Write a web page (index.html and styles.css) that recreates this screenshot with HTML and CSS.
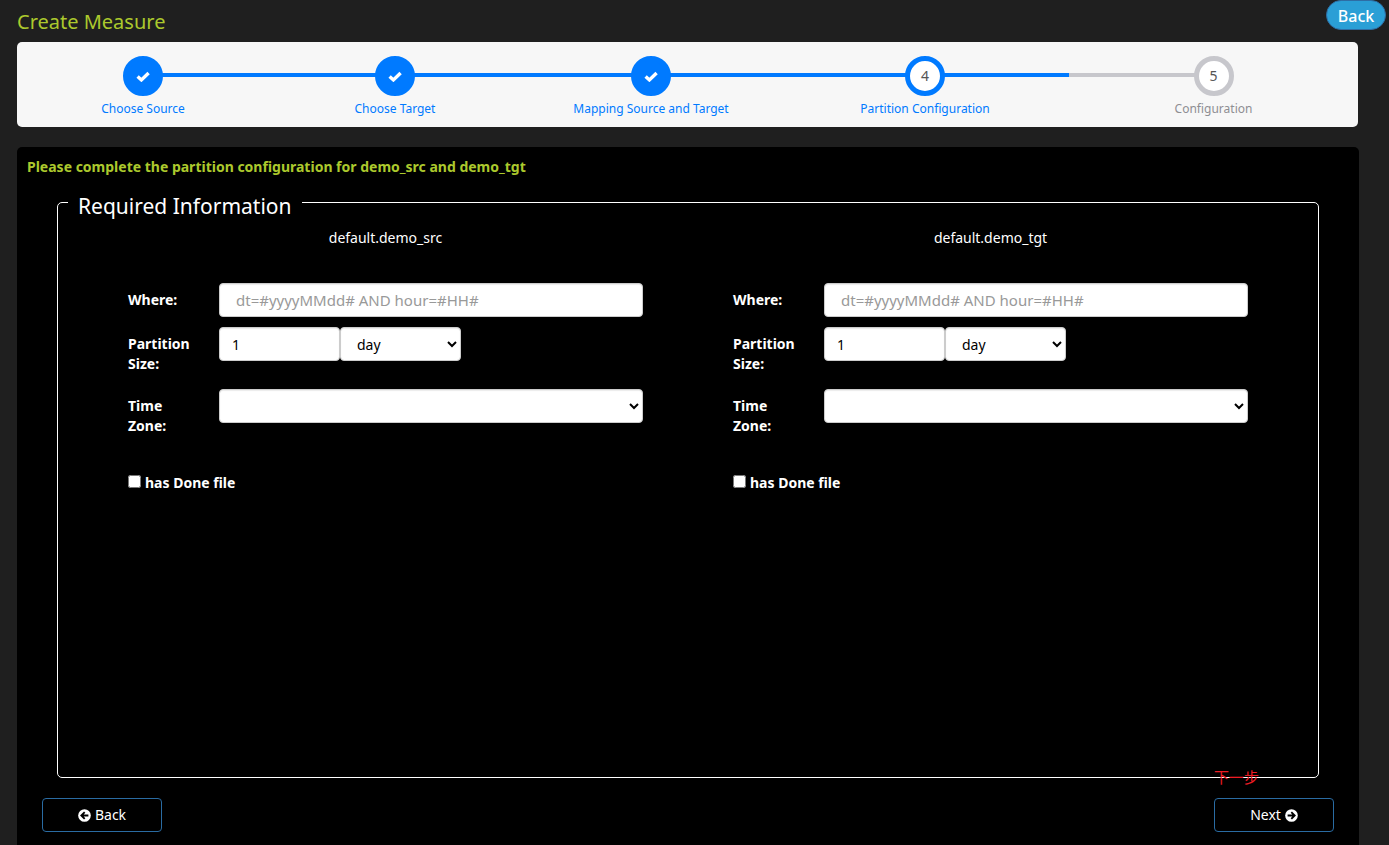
FILE: index.html
```html
<!DOCTYPE html>
<html lang="en">
<head>
<meta charset="utf-8">
<title>Create Measure</title>
<link rel="stylesheet" href="styles.css">
</head>
<body>
<header class="page-header">
  <h1 class="page-title">Create Measure</h1>
  <button type="button" class="top-back">Back</button>
</header>
<main class="page-main">
  <ol class="steps">
    <li class="step done"><span class="dot"><svg class="check" viewBox="0 0 14 11"><path d="M1.6 5.4 5.4 8.9 12.6 2"/></svg></span><span class="step-name">Choose Source</span></li>
    <li class="step done"><span class="dot"><svg class="check" viewBox="0 0 14 11"><path d="M1.6 5.4 5.4 8.9 12.6 2"/></svg></span><span class="step-name">Choose Target</span></li>
    <li class="step done"><span class="dot"><svg class="check" viewBox="0 0 14 11"><path d="M1.6 5.4 5.4 8.9 12.6 2"/></svg></span><span class="step-name">Mapping Source and Target</span></li>
    <li class="step current"><span class="dot">4</span><span class="step-name">Partition Configuration</span></li>
    <li class="step"><span class="dot">5</span><span class="step-name">Configuration</span></li>
  </ol>

  <form class="panel">
    <h2 class="panel-title">Please complete the partition configuration for demo_src and demo_tgt</h2>
    <fieldset class="required">
      <legend>Required Information</legend>
      <div class="columns">
        <section class="column">
          <h3 class="table-name">default.demo_src</h3>
          <div class="field">
            <label for="src-where">Where:</label>
            <input class="control where" id="src-where" type="text" placeholder="dt=#yyyyMMdd# AND hour=#HH#">
          </div>
          <div class="field">
            <label for="src-size">Partition Size:</label>
            <div class="size">
              <input class="control" id="src-size" type="text" value="1">
              <select class="control" aria-label="Source partition unit"><option>day</option><option>hour</option><option>minute</option></select>
            </div>
          </div>
          <div class="field zone">
            <label for="src-zone">Time Zone:</label>
            <select class="control" id="src-zone"><option></option></select>
          </div>
          <label class="done-file"><input type="checkbox">has Done file</label>
        </section>
        <section class="column">
          <h3 class="table-name">default.demo_tgt</h3>
          <div class="field">
            <label for="tgt-where">Where:</label>
            <input class="control where" id="tgt-where" type="text" placeholder="dt=#yyyyMMdd# AND hour=#HH#">
          </div>
          <div class="field">
            <label for="tgt-size">Partition Size:</label>
            <div class="size">
              <input class="control" id="tgt-size" type="text" value="1">
              <select class="control" aria-label="Target partition unit"><option>day</option><option>hour</option><option>minute</option></select>
            </div>
          </div>
          <div class="field zone">
            <label for="tgt-zone">Time Zone:</label>
            <select class="control" id="tgt-zone"><option></option></select>
          </div>
          <label class="done-file"><input type="checkbox">has Done file</label>
        </section>
      </div>
    </fieldset>
    <div class="actions">
      <button type="button" class="nav-button"><svg class="arrow" viewBox="0 0 14 14"><circle cx="7" cy="7" r="6.8"/><path d="M11.2 7H4M7.2 3.4 3.6 7l3.6 3.6"/></svg>Back</button>
      <div class="next-wrap">
        <span class="note" lang="zh">下一步</span>
        <button type="button" class="nav-button">Next<svg class="arrow" viewBox="0 0 14 14"><circle cx="7" cy="7" r="6.8"/><path d="M2.8 7H10M6.8 3.4 10.4 7l-3.6 3.6"/></svg></button>
      </div>
    </div>
  </form>
</main>
</body>
</html>
```
FILE: styles.css
```css
* { box-sizing: border-box; }
body {
  display: flex;
  flex-direction: column;
  min-height: 100vh;
  margin: 0;
  background: #1f1f1f;
  color: #fff;
  font: 14px/20px "Noto Sans", "Open Sans", sans-serif;
}
button, input, select { font: inherit; }
h1, h2, h3 { margin: 0; }

.page-header {
  display: flex;
  justify-content: space-between;
  align-items: flex-start;
  height: 42px;
  padding: 0 3px 0 17px;
}
.page-title {
  padding-top: 8px;
  color: #acc92d;
  font-size: 20px;
  font-weight: 400;
  line-height: 28px;
}
.top-back {
  width: 60px;
  height: 30px;
  padding: 2px 0 0;
  border: 1px solid #2e6da4;
  border-radius: 15px;
  background: #2a9fd6;
  color: #fff;
  font-size: 16px;
  font-weight: 500;
}
.page-main {
  display: flex;
  flex: 1;
  flex-direction: column;
  gap: 20px;
  padding: 0 30px 0 17px;
}

.steps {
  display: grid;
  grid-template-columns: 252fr 252fr 260fr 288fr 289fr;
  height: 85px;
  margin: 0 1px 0 0;
  padding: 14px 0 0;
  border-radius: 5px;
  background: #f7f7f7;
  list-style: none;
}
.step {
  --line: #c7c7cc;
  display: flex;
  flex-direction: column;
  align-items: center;
  gap: 3px;
  background: linear-gradient(var(--line), var(--line)) 0 17px / 100% 4px no-repeat;
  color: #8e8e93;
  font-size: 12px;
}
.step.done, .step.current { --line: #007aff; color: #007aff; }
.step:first-child { background-position: 100% 17px; background-size: 50% 4px; }
.step:last-child { background-size: 50% 4px; }
.dot {
  display: grid;
  place-items: center;
  width: 40px;
  height: 40px;
  border: 5px solid var(--line);
  border-radius: 50%;
  background: #fff;
  color: #555;
  font-size: 14px;
}
.done .dot { background: var(--line); }
.check { width: 14px; height: 11px; fill: none; stroke: #fff; stroke-width: 3.4; }

.panel {
  flex: 1;
  padding: 10px 25px 13px;
  border-radius: 5px 5px 0 0;
  background: #000;
}
.panel-title {
  margin-left: -15px;
  color: #acc92d;
  font-size: 14px;
  font-weight: 700;
  line-height: 20px;
}
.required {
  min-width: 0;
  min-height: 595px;
  margin: 6px 15px 20px;
  padding: 0 10px;
  border: 1px solid #fff;
  border-radius: 5px;
}
.required legend {
  padding: 8px 10px 0;
  font-size: 21px;
  line-height: 30px;
}
.columns {
  display: grid;
  grid-template-columns: 1fr 1fr;
  padding: 7px 15px 0;
}
.column { padding: 0 45px; }
.table-name {
  margin-bottom: 35px;
  font-size: 14px;
  font-weight: 400;
  line-height: 20px;
  text-align: center;
}
.field {
  display: grid;
  grid-template-columns: 61px 1fr;
  gap: 30px;
  align-items: start;
  margin-bottom: 10px;
}
.field label { padding-top: 7px; font-weight: 700; }
.zone { margin-top: 15px; }
.control {
  width: 100%;
  height: 34px;
  padding: 6px 12px;
  border: 1px solid #ccc;
  border-radius: 4px;
  background-color: #fff;
  box-shadow: inset 0 1px 1px rgba(0, 0, 0, 0.08);
  color: #000;
}
.where { padding-left: 16px; font-size: 15px; }
.control::placeholder { color: #999; opacity: 1; }
select.control { padding: 6px 0 6px 12px; }
.size { display: grid; grid-template-columns: 121px 121px; }
.done-file {
  display: flex;
  align-items: flex-start;
  gap: 4px;
  padding-top: 27px;
  font-weight: 700;
}
.done-file input { width: 13px; height: 13px; margin: 2px 0 0; }

.actions { display: flex; justify-content: space-between; }
.nav-button {
  display: flex;
  align-items: center;
  justify-content: center;
  gap: 4px;
  width: 120px;
  height: 34px;
  padding: 0;
  border: 1px solid #2a6ca3;
  border-radius: 4px;
  background: #000;
  color: #fff;
}
.arrow { width: 13px; height: 13px; fill: #fff; }
.arrow path { fill: none; stroke: #000; stroke-width: 2; }
.next-wrap { position: relative; }
.note {
  position: absolute;
  top: -31px;
  left: 0;
  color: #ed1c24;
  font-family: "Noto Sans CJK SC", sans-serif;
  font-size: 15px;
}
```
